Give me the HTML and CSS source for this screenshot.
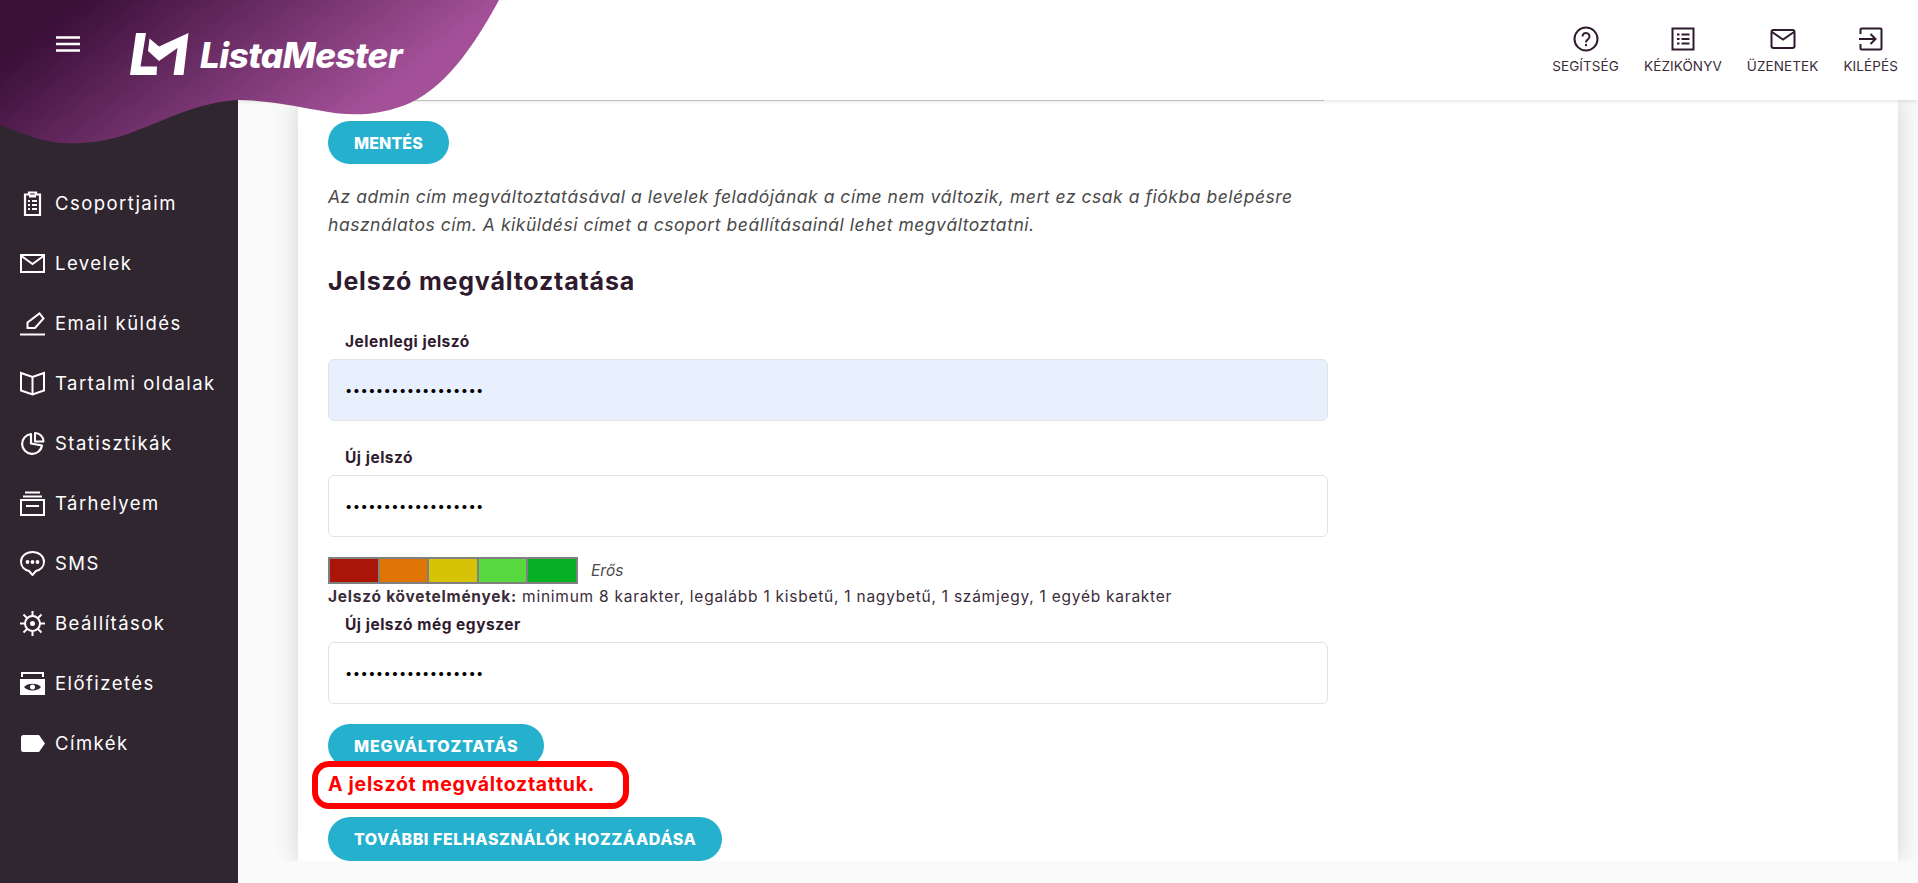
FILE: index.html
```html
<!DOCTYPE html>
<html lang="hu">
<head>
<meta charset="UTF-8" />
<meta name="viewport" content="width=device-width, initial-scale=1" />
<title>ListaMester</title>
<link rel="stylesheet" href="styles.css">
</head>
<body>
  <div class="app">
    <!-- Sidebar -->
    <aside class="sidebar">
      <nav class="side-nav">
        <a class="side-item">
          <svg class="side-icon" viewBox="0 0 25 25"><path d="M5 3.500H9V1.500H16V3.500H20V24H5Z" fill="none" stroke="#fff" stroke-width="2.200"/><path d="M9 5H16" stroke="#fff" stroke-width="3"/><path d="M8 10H10M12 10H17M8 14H10M12 14H17M8 18H10M12 18H17" stroke="#fff" stroke-width="2"/></svg>
          <span>Csoportjaim</span>
        </a>
        <a class="side-item">
          <svg class="side-icon" viewBox="0 0 25 25"><rect x="1" y="4" width="23" height="17" fill="none" stroke="#fff" stroke-width="2"/><path d="M1.500 5L12.500 13L23.500 5" fill="none" stroke="#fff" stroke-width="2"/></svg>
          <span>Levelek</span>
        </a>
        <a class="side-item">
          <svg class="side-icon" viewBox="0 0 25 25"><path d="M7.500 17V11.500L19.500 2.500L23.500 7.500L15 17Z" fill="none" stroke="#fff" stroke-width="2"/><path d="M0 23.500H25" stroke="#fff" stroke-width="2"/></svg>
          <span>Email küldés</span>
        </a>
        <a class="side-item">
          <svg class="side-icon" viewBox="0 0 25 25"><path d="M1 2L12.500 6L24 2V19.500L12.500 23.500L1 19.500ZM12.500 6V23.500" fill="none" stroke="#fff" stroke-width="2"/></svg>
          <span>Tartalmi oldalak</span>
        </a>
        <a class="side-item">
          <svg class="side-icon" viewBox="0 0 25 25"><path d="M11 3A10 10 0 1 0 22 14.500L11 12.500Z" fill="none" stroke="#fff" stroke-width="2.200" stroke-linejoin="round"/><path d="M15 2A8.500 8.500 0 0 1 23.500 10.500H15Z" fill="none" stroke="#fff" stroke-width="2" stroke-linejoin="round"/></svg>
          <span>Statisztikák</span>
        </a>
        <a class="side-item">
          <svg class="side-icon" viewBox="0 0 25 25"><path d="M5 1.500H20M3 5.500H22M6 15H19" stroke="#fff" stroke-width="2"/><rect x="1" y="9" width="23" height="15" fill="none" stroke="#fff" stroke-width="2"/></svg>
          <span>Tárhelyem</span>
        </a>
        <a class="side-item">
          <svg class="side-icon" viewBox="0 0 25 25"><path d="M12.500 1C6 1 1 5.300 1 10.800C1 15.500 4.500 19 9 20L12.500 24L16 20C20.500 19 24 15.500 24 10.800C24 5.300 19 1 12.500 1Z" fill="none" stroke="#fff" stroke-width="2"/><circle cx="7.500" cy="11" r="1.900" fill="#fff"/><circle cx="12.500" cy="11" r="1.900" fill="#fff"/><circle cx="17.500" cy="11" r="1.900" fill="#fff"/></svg>
          <span>SMS</span>
        </a>
        <a class="side-item">
          <svg class="side-icon" viewBox="0 0 25 25"><circle cx="12.500" cy="12.500" r="7.500" fill="none" stroke="#fff" stroke-width="2"/><circle cx="12.500" cy="12.500" r="2.500" fill="#fff"/><path d="M12.500 0V5M12.500 20V25M0 12.500H5M20 12.500H25M3.500 3.500L7 7M18 18L21.500 21.500M21.500 3.500L18 7M7 18L3.500 21.500" stroke="#fff" stroke-width="2"/></svg>
          <span>Beállítások</span>
        </a>
        <a class="side-item">
          <svg class="side-icon" viewBox="0 0 25 25"><path d="M2 6V2H23V6" fill="none" stroke="#fff" stroke-width="2"/><rect x="0" y="8" width="25" height="16" fill="#fff"/><path d="M4 16C7 11.500 18 11.500 21 16C18 20.500 7 20.500 4 16Z" fill="#2f2630"/><circle cx="12.500" cy="16" r="2.500" fill="#fff"/></svg>
          <span>Előfizetés</span>
        </a>
        <a class="side-item">
          <svg class="side-icon" viewBox="0 0 25 25"><path d="M3.500 4H19L25 12.500L19 21H3.500Q1 21 1 18.500V6.500Q1 4 3.500 4Z" fill="#fff"/></svg>
          <span>Címkék</span>
        </a>
      </nav>
    </aside>

    <div class="main">
      <!-- Top bar -->
      <header class="topbar">
        <a class="top-link">
          <svg class="top-icon" viewBox="0 0 26 26"><circle cx="13" cy="13" r="11.500" fill="none" stroke="#2f1a2e" stroke-width="2"/><path d="M9.500 10.500A3.500 3.500 0 1 1 15 13.300C13.700 14.200 13 15 13 16.500" fill="none" stroke="#2f1a2e" stroke-width="2"/><rect x="12" y="18" width="2" height="2.200" fill="#2f1a2e"/></svg>
          <span>Segítség</span>
        </a>
        <a class="top-link">
          <svg class="top-icon" viewBox="0 0 26 26"><rect x="2.500" y="2.500" width="21" height="21" fill="none" stroke="#2f1a2e" stroke-width="2"/><path d="M7 8.500H9.500M11.500 8.500H19.500M7 13H9.500M11.500 13H19.500M7 17.500H9.500M11.500 17.500H19.500" stroke="#2f1a2e" stroke-width="2"/></svg>
          <span>Kézikönyv</span>
        </a>
        <a class="top-link">
          <svg class="top-icon" viewBox="0 0 26 26"><rect x="1.500" y="4" width="23" height="18" rx="2" fill="none" stroke="#2f1a2e" stroke-width="2"/><path d="M2 6L13 13.500L24 6" fill="none" stroke="#2f1a2e" stroke-width="2"/></svg>
          <span>Üzenetek</span>
        </a>
        <a class="top-link">
          <svg class="top-icon" viewBox="0 0 26 26"><path d="M2.500 8V3.500Q2.500 2.500 3.500 2.500H22.500Q23.500 2.500 23.500 3.500V22.500Q23.500 23.500 22.500 23.500H3.500Q2.500 23.500 2.500 22.500V18" fill="none" stroke="#2f1a2e" stroke-width="2"/><path d="M1 13H17M12.500 8L17.500 13L12.500 18" fill="none" stroke="#2f1a2e" stroke-width="2"/></svg>
          <span>Kilépés</span>
        </a>
      </header>

      <!-- Page content, scrolled part way down -->
      <div class="content">
        <section class="card">
          <div class="scrolled-edge"></div>
          <button class="btn btn-first">Mentés</button>
          <p class="note">Az admin cím megváltoztatásával a levelek feladójának a címe nem változik, mert ez csak a fiókba belépésre használatos cím. A kiküldési címet a csoport beállításainál lehet megváltoztatni.</p>
          <h2 class="section-title">Jelszó megváltoztatása</h2>

          <label class="field-label field-label-first">Jelenlegi jelszó</label>
          <input class="field field-autofill" type="password" value="aaaaaaaaaaaaaaaaaa">

          <label class="field-label">Új jelszó</label>
          <input class="field" type="password" value="aaaaaaaaaaaaaaaaaa">

          <div class="strength">
            <div class="meter">
              <div class="meter-cell cell-1"></div>
              <div class="meter-cell cell-2"></div>
              <div class="meter-cell cell-3"></div>
              <div class="meter-cell cell-4"></div>
              <div class="meter-cell cell-5"></div>
            </div>
            <em class="strength-text">Erős</em>
          </div>
          <p class="requirements"><strong>Jelszó követelmények:</strong> minimum 8 karakter, legalább 1 kisbetű, 1 nagybetű, 1 számjegy, 1 egyéb karakter</p>

          <label class="field-label field-label-tight">Új jelszó még egyszer</label>
          <input class="field" type="password" value="aaaaaaaaaaaaaaaaaa">

          <button class="btn btn-change">Megváltoztatás</button>
          <div class="alert">A jelszót megváltoztattuk.</div>
          <button class="btn btn-add">További felhasználók hozzáadása</button>
        </section>
      </div>
    </div>

    <!-- Logo wave lies over the sidebar and the top bar -->
    <svg class="wave" viewBox="0 0 500 144">
      <defs>
        <linearGradient id="waveGrad" gradientUnits="userSpaceOnUse" x1="30" y1="40" x2="189" y2="245">
          <stop offset="0" stop-color="#3a0f38"/>
          <stop offset="1" stop-color="#a35098"/>
        </linearGradient>
      </defs>
      <path d="M0 0H499C480 35 450 85 410 103C380 116 350 117 317 110C290 105 262 100 238 100C200 102 170 118 133 132C100 145 60 147 33 137C20 133 10 129 0 125Z" fill="url(#waveGrad)"/>
    </svg>
    <svg class="burger" viewBox="0 0 24 16"><path d="M0 1.500H24M0 8H24M0 14.500H24" stroke="#fff" stroke-width="2.500"/></svg>
    <div class="logo">
      <svg class="logo-mark" viewBox="0 0 60 44"><path d="M6 0H16L10.500 33.500H27L26.500 42H0Z" fill="#fff"/><path d="M19.500 5.500L29 13.500L58.500 0L53.500 42H43.500L47.500 15L29 28L18 18Z" fill="#fff"/></svg>
      <span class="logo-text">ListaMester</span>
    </div>
  </div>
</body>
</html>
```
FILE: styles.css
```css
* {
  margin: 0;
  padding: 0;
  box-sizing: border-box;
}

html, body {
  height: 100%;
  font-family: 'Inter', 'Open Sans', sans-serif;
  overflow: hidden;
  background: #fafafa;
  color: #2f1a2e;
}

.app {
  position: relative;
  display: flex;
  height: 100vh;
}

/* Sidebar */
.sidebar {
  width: 238px;
  flex-shrink: 0;
  background: #2f2630;
  padding-top: 173px;
}

.side-item {
  display: flex;
  align-items: center;
  gap: 10px;
  height: 60px;
  padding-left: 20px;
  color: #fff;
  font-size: 18.5px;
  letter-spacing: 1.45px;
}

.side-icon {
  width: 25px;
  height: 25px;
  flex-shrink: 0;
}

/* Top bar */
.main {
  flex: 1;
  min-width: 0;
  display: flex;
  flex-direction: column;
}

.topbar {
  position: relative;
  z-index: 2;
  height: 100px;
  flex-shrink: 0;
  display: flex;
  justify-content: flex-end;
  align-items: flex-start;
  gap: 25px;
  padding: 26px 20px 0 0;
  background: #fff;
  box-shadow: 0 1px 5px rgba(0, 0, 0, 0.12);
}

.top-link {
  display: flex;
  flex-direction: column;
  align-items: center;
  gap: 4px;
  font-size: 13.5px;
  line-height: 20px;
  letter-spacing: 0.1px;
  text-transform: uppercase;
  color: #3b2c3a;
}

.top-icon {
  width: 26px;
  height: 26px;
}

/* Content */
.content {
  height: 761px;
  overflow: hidden;
  padding-left: 60px;
}

.card {
  width: 1600px;
  min-height: 100%;
  padding-left: 30px;
  background: #fff;
  box-shadow: 0 0 24px rgba(0, 0, 0, 0.16);
}

.scrolled-edge {
  width: 996px;
  height: 1px;
  background: #ccc;
}

.btn {
  display: block;
  height: 43px;
  padding: 0 26px;
  border: none;
  border-radius: 22px;
  background: #25b1cd;
  color: #fff;
  font-family: inherit;
  font-size: 16px;
  font-weight: 800;
  text-transform: uppercase;
}

.btn-first {
  margin-top: 20px;
  letter-spacing: 0.1px;
}

.note {
  width: 1000px;
  margin-top: 19px;
  font-size: 17.5px;
  line-height: 28px;
  font-style: italic;
  letter-spacing: 0.53px;
  color: #4a4a4a;
}

.section-title {
  margin-top: 24px;
  font-size: 25px;
  line-height: 36px;
  font-weight: 700;
  letter-spacing: 0.8px;
}

.field-label {
  display: block;
  margin: 25px 0 5px 17px;
  font-size: 15.5px;
  line-height: 24px;
  font-weight: 700;
  letter-spacing: 0.5px;
}

.field-label-first {
  margin-top: 31px;
}

.field-label-tight {
  margin-top: 4px;
}

.field {
  display: block;
  width: 1000px;
  height: 62px;
  padding: 0 16px;
  border: 1px solid #e2e2e2;
  border-radius: 6px;
  background: #fff;
  font-family: inherit;
  font-size: 13px;
  letter-spacing: 0.4px;
  color: #000;
}

.field-autofill {
  background: #e8f0fe;
}

.strength {
  display: flex;
  align-items: center;
  gap: 13px;
  margin-top: 18px;
  height: 30px;
}

.meter {
  display: flex;
  gap: 2px;
  width: 250px;
  height: 27px;
  padding: 2px;
  background: #808080;
}

.meter-cell {
  flex: 1;
}

.cell-1 { background: #ab1508; }
.cell-2 { background: #e07506; }
.cell-3 { background: #d6c307; }
.cell-4 { background: #57d93f; }
.cell-5 { background: #06b025; }

.strength-text {
  font-size: 15.5px;
  color: #4a4a4a;
}

.requirements {
  font-size: 15.5px;
  line-height: 24px;
  letter-spacing: 0.75px;
  color: #3b2c3a;
}

.btn-change {
  margin-top: 20px;
  letter-spacing: 0.8px;
}

.alert {
  position: relative;
  width: 317px;
  height: 48px;
  margin: -6px 0 8px -16px;
  padding: 0 0 3px 10px;
  display: flex;
  align-items: center;
  border: 6px solid #f00;
  border-radius: 17px;
  background: #fff;
  color: #f00;
  font-size: 19.5px;
  font-weight: 700;
  letter-spacing: 0.7px;
}

.btn-add {
  height: 44px;
  letter-spacing: 0.55px;
}

/* Logo and wave */
.wave {
  position: absolute;
  top: 0;
  left: 0;
  width: 500px;
  height: 144px;
  z-index: 3;
}

.burger {
  position: absolute;
  top: 36px;
  left: 56px;
  width: 24px;
  height: 16px;
  z-index: 4;
}

.logo {
  position: absolute;
  top: 33px;
  left: 130px;
  z-index: 4;
  display: flex;
  align-items: center;
  gap: 10px;
  color: #fff;
}

.logo-mark {
  width: 60px;
  height: 44px;
}

.logo-text {
  font-size: 35px;
  font-weight: 800;
  font-style: italic;
  letter-spacing: -0.5px;
}
```
